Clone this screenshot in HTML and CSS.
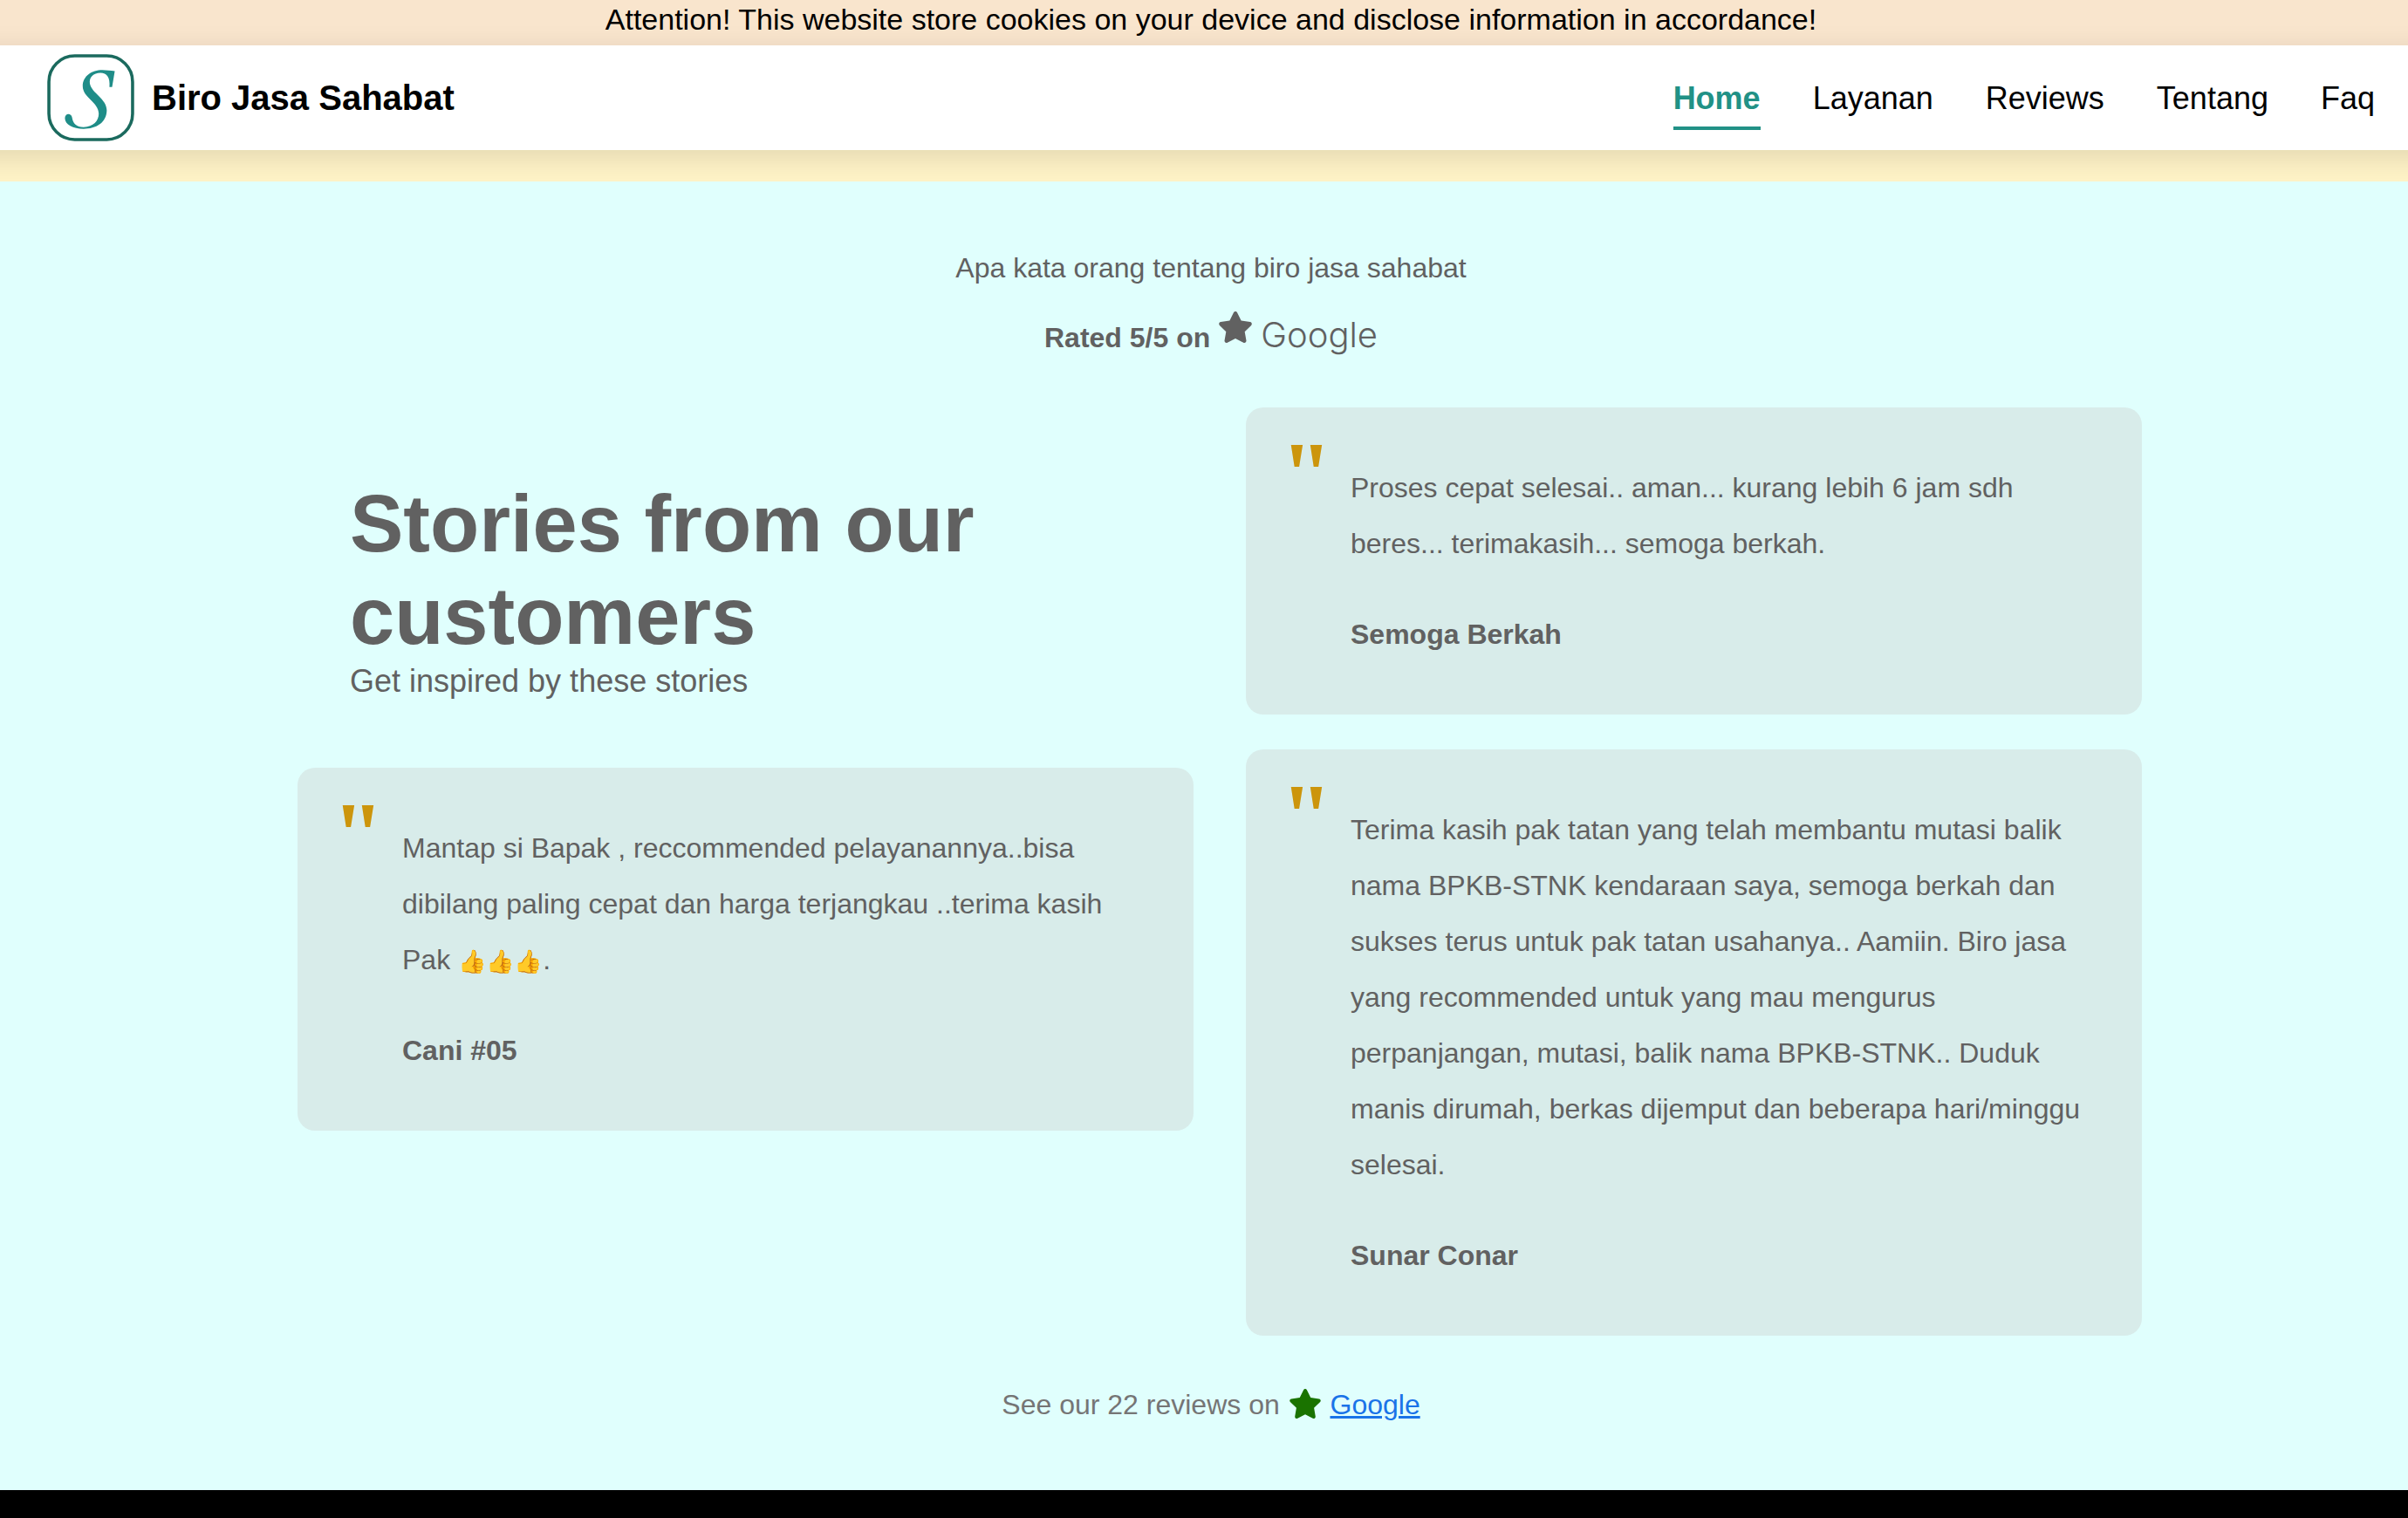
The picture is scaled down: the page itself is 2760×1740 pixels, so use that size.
FILE: index.html
```html
<!DOCTYPE html>
<html lang="id">
<head>
<meta charset="utf-8">
<title>Biro Jasa Sahabat</title>
<link rel="stylesheet" href="styles.css">
</head>
<body>
<div class="notice">Attention! This website store cookies on your device and disclose information in accordance!</div>
<header class="header">
  <a class="brand" href="#home">
    <svg class="logo" viewBox="0 0 98 98" aria-hidden="true">
      <rect x="2" y="2" width="94" height="94" rx="29" fill="#fff" stroke="#1b6a5e" stroke-width="3.5"/>
      <path d="M76 19 L73 37 L70 37 C71 26 67 21 60 21 C52 21 47 26 48 33 C50 44 67 50 67 63 C67 77 55 84 41 84 C29 84 20 79 20 72 C20 66 27 66 28 71 C29 78 33 82 41 82 C52 82 58 75 58 67 C58 54 40 49 40 36 C40 25 50 18 62 18 C67 18 71 19 76 19 Z" fill="#1f8d88"/>
    </svg>
    <span>Biro Jasa Sahabat</span>
  </a>
  <nav class="nav">
    <a class="nav-link active" href="#home">Home</a>
    <a class="nav-link" href="#layanan">Layanan</a>
    <a class="nav-link" href="#reviews">Reviews</a>
    <a class="nav-link" href="#tentang">Tentang</a>
    <a class="nav-link" href="#faq">Faq</a>
  </nav>
</header>
<div class="strip"></div>
<main class="reviews" id="reviews">
  <p class="lead">Apa kata orang tentang biro jasa sahabat</p>
  <p class="rating"><strong>Rated 5/5 on</strong>
    <svg class="star star-top" viewBox="24 0 528 512" aria-hidden="true"><path fill="currentColor" d="M259.3 17.8L194 150.2 47.9 171.5c-26.2 3.8-36.7 36.1-17.7 54.6l105.7 103-25 145.5c-4.5 26.3 23.2 46 46.4 33.7L288 439.6l130.7 68.7c23.2 12.2 50.9-7.4 46.4-33.7l-25-145.5 105.7-103c19-18.5 8.5-50.8-17.7-54.6L382 150.2 316.7 17.8c-11.7-23.6-45.6-23.9-57.4 0z"/></svg>
    <span class="google">Google</span></p>
  <div class="columns">
    <div class="column">
      <div class="intro">
        <h1>Stories from our customers</h1>
        <p>Get inspired by these stories</p>
      </div>
      <blockquote class="card">
        <p>Mantap si Bapak , reccommended pelayanannya..bisa dibilang paling cepat dan harga terjangkau ..terima kasih Pak <span class="emoji">👍👍👍</span>.</p>
        <footer>Cani #05</footer>
      </blockquote>
    </div>
    <div class="column">
      <blockquote class="card">
        <p>Proses cepat selesai.. aman... kurang lebih 6 jam sdh beres... terimakasih... semoga berkah.</p>
        <footer>Semoga Berkah</footer>
      </blockquote>
      <blockquote class="card">
        <p>Terima kasih pak tatan yang telah membantu mutasi balik nama BPKB-STNK kendaraan saya, semoga berkah dan sukses terus untuk pak tatan usahanya.. Aamiin. Biro jasa yang recommended untuk yang mau mengurus perpanjangan, mutasi, balik nama BPKB-STNK.. Duduk manis dirumah, berkas dijemput dan beberapa hari/minggu selesai.</p>
        <footer>Sunar Conar</footer>
      </blockquote>
    </div>
  </div>
  <p class="more">See our 22 reviews on
    <svg class="star star-green" viewBox="24 0 528 512" aria-hidden="true"><path fill="currentColor" d="M259.3 17.8L194 150.2 47.9 171.5c-26.2 3.8-36.7 36.1-17.7 54.6l105.7 103-25 145.5c-4.5 26.3 23.2 46 46.4 33.7L288 439.6l130.7 68.7c23.2 12.2 50.9-7.4 46.4-33.7l-25-145.5 105.7-103c19-18.5 8.5-50.8-17.7-54.6L382 150.2 316.7 17.8c-11.7-23.6-45.6-23.9-57.4 0z"/></svg>
    <a href="#google">Google</a></p>
</main>
</body>
</html>
```
FILE: styles.css
```css
* { box-sizing: border-box; }
body {
  margin: 0;
  overflow-x: hidden;
  background: #000;
  color: #000;
  font-family: "Liberation Sans", Helvetica, Arial, sans-serif;
}
p, h1, blockquote { margin: 0; }
.notice {
  height: 52px;
  padding-left: 16px;
  background: #f9e5cd;
  font-size: 34px;
  line-height: 44px;
  text-align: center;
}
/* The bar runs past both window edges so its shadow stays even. */
.header {
  position: relative;
  display: flex;
  align-items: center;
  justify-content: space-between;
  height: 120px;
  margin: 0 -40px;
  padding: 0 78px 0 94px;
  background: #fff;
  box-shadow: 0 8px 32px rgba(0, 0, 0, 0.12);
}
.brand {
  display: flex;
  align-items: center;
  gap: 20px;
  color: #000;
  font-size: 40px;
  font-weight: 700;
  text-decoration: none;
}
.logo { width: 100px; height: 100px; }
.nav { display: flex; gap: 60px; }
.nav-link {
  padding: 16px 0 10px;
  border-bottom: 4px solid transparent;
  color: #000;
  font-size: 36px;
  line-height: 44px;
  text-decoration: none;
}
.nav-link.active {
  border-color: #219186;
  color: #219186;
  font-weight: 700;
}
.strip { height: 36px; background: #fff3c7; }
.reviews {
  position: relative;
  padding: 67px 0 66px 16px;
  background: #e0fffd;
  color: #616161;
  font-size: 32px;
  line-height: 64px;
}
.lead, .rating, .more { text-align: center; }
.rating {
  display: flex;
  justify-content: center;
  gap: 10px;
  height: 80px;
  line-height: 96px;
}
.google { font-family: Inter, sans-serif; font-size: 40px; font-weight: 300; line-height: 90px; }
.star { width: 38px; height: 36px; }
.star-top { margin-top: 18px; }
.columns {
  display: grid;
  grid-template-columns: 1fr 1fr;
  gap: 60px;
  margin: 48px 305px 47px 325px;
}
.column { display: flex; flex-direction: column; gap: 40px; }
.intro { padding: 80px 60px 37px; }
.intro h1 { font-size: 92px; line-height: 106px; }
.intro p { font-size: 36px; line-height: 44px; }
.card {
  position: relative;
  padding: 60px 60px 60px 120px;
  border-radius: 20px;
  background: #d8ecea;
}
.card::before {
  content: '"';
  position: absolute;
  top: 30px;
  left: 40px;
  color: #cc950c;
  font-family: "Liberation Serif", serif;
  font-size: 106px;
  font-weight: 700;
  line-height: 96px;
}
.card footer { margin-top: 40px; font-weight: 700; }
.emoji { font-family: "Apple Color Emoji", "Noto Color Emoji", sans-serif; font-size: 26px; line-height: 32px; }
.more { color: #757575; }
.more a { color: #1a73e8; }
.star-green { width: 36px; height: 34px; margin: 0 2px; color: #1a7300; vertical-align: -5px; }
```
